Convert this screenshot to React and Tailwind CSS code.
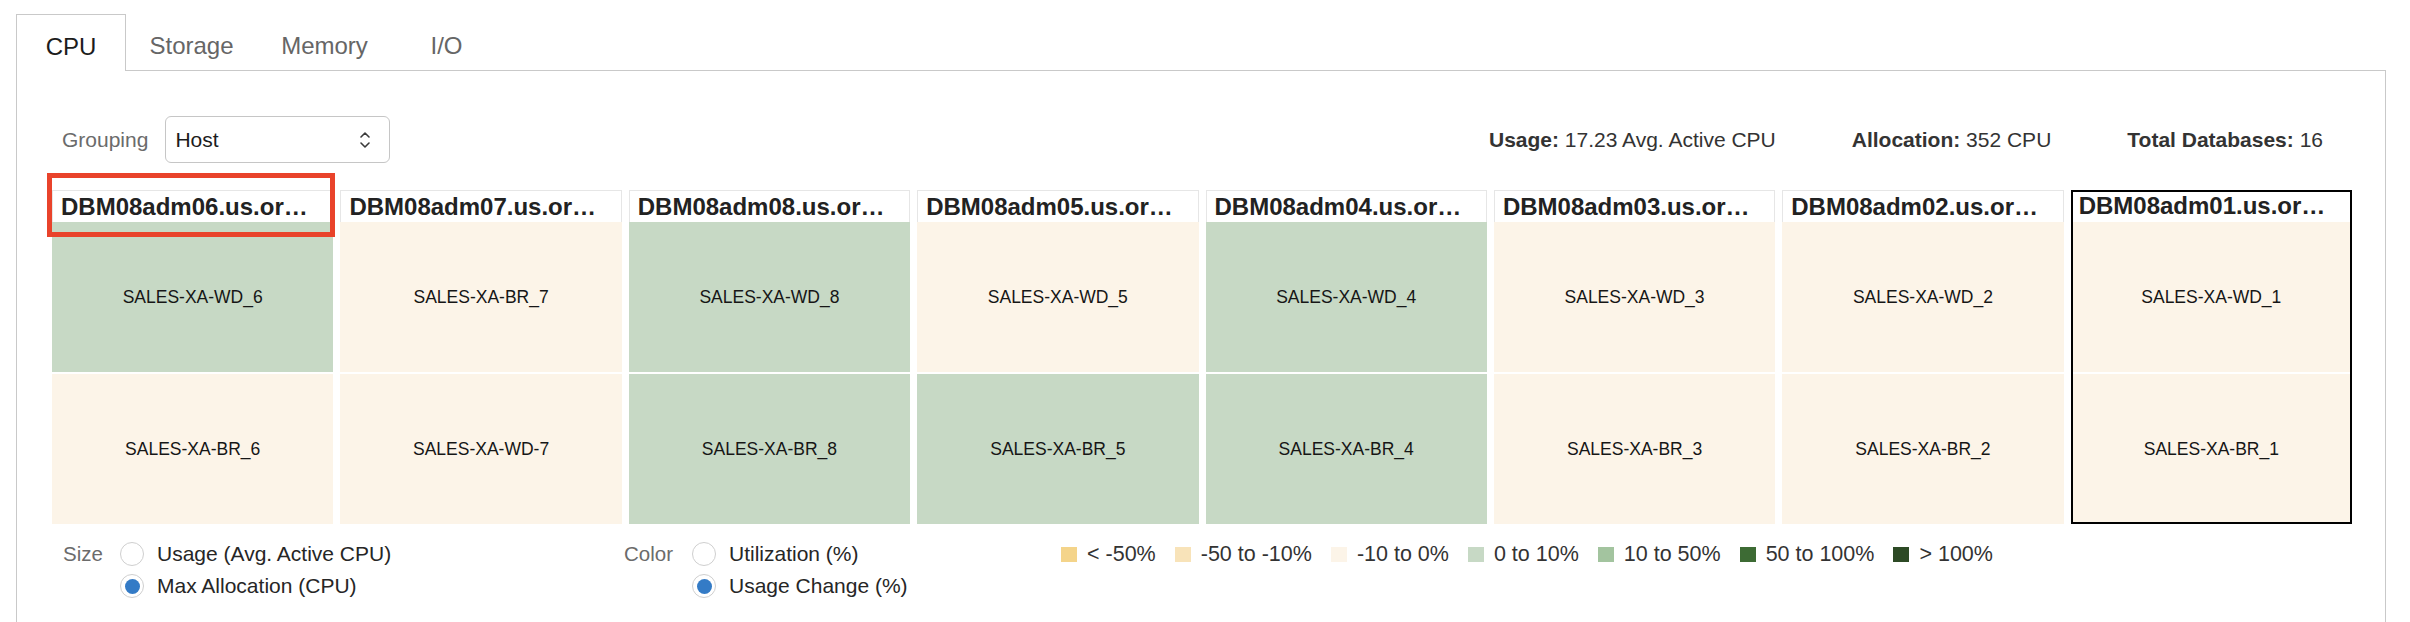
import React from 'react'

/* ─── data ──────────────────────────────────────────────────────────────── */
const GREEN = 'bg-[#c7d9c5]'
const CREAM = 'bg-[#fcf4e8]'

const hosts = [
  { name: 'DBM08adm06.us.or…', top: ['SALES-XA-WD_6', GREEN], bottom: ['SALES-XA-BR_6', CREAM], flagged: true },
  { name: 'DBM08adm07.us.or…', top: ['SALES-XA-BR_7', CREAM], bottom: ['SALES-XA-WD-7', CREAM] },
  { name: 'DBM08adm08.us.or…', top: ['SALES-XA-WD_8', GREEN], bottom: ['SALES-XA-BR_8', GREEN] },
  { name: 'DBM08adm05.us.or…', top: ['SALES-XA-WD_5', CREAM], bottom: ['SALES-XA-BR_5', GREEN] },
  { name: 'DBM08adm04.us.or…', top: ['SALES-XA-WD_4', GREEN], bottom: ['SALES-XA-BR_4', GREEN] },
  { name: 'DBM08adm03.us.or…', top: ['SALES-XA-WD_3', CREAM], bottom: ['SALES-XA-BR_3', CREAM] },
  { name: 'DBM08adm02.us.or…', top: ['SALES-XA-WD_2', CREAM], bottom: ['SALES-XA-BR_2', CREAM] },
  { name: 'DBM08adm01.us.or…', top: ['SALES-XA-WD_1', CREAM], bottom: ['SALES-XA-BR_1', CREAM], selected: true },
]

const legend = [
  ['bg-[#f4d48a]', '< -50%'],
  ['bg-[#f8e3b9]', '-50 to -10%'],
  ['bg-[#fcf4e8]', '-10 to 0%'],
  ['bg-[#c7d9c5]', '0 to 10%'],
  ['bg-[#a3c49f]', '10 to 50%'],
  ['bg-[#3d6b34]', '50 to 100%'],
  ['bg-[#2d4a25]', '> 100%'],
]

/* ─── bits ──────────────────────────────────────────────────────────────── */
function Radio({ checked, label }) {
  return (
    <div className="flex items-center h-[32px]">
      <span className="w-[24px] h-[24px] rounded-full border-[1.5px] border-[#cfcfcf] bg-white flex items-center justify-center shrink-0">
        {checked && <span className="w-[15px] h-[15px] rounded-full bg-[#347bc6]" />}
      </span>
      <span className="ml-[13px] text-[21px] text-[#262626] whitespace-nowrap">{label}</span>
    </div>
  )
}

function Cell({ label, color }) {
  return (
    <div className={`h-[150px] flex items-center justify-center text-[17.5px] text-[#161616] ${color}`}>
      {label}
    </div>
  )
}

function HostColumn({ host }) {
  return (
    <div className={`relative flex flex-col ${host.selected ? 'outline-2 outline-black -outline-offset-2' : ''}`}>
      <div
        className={`h-[32px] bg-white flex items-center pl-[8px] text-[24px] font-bold text-[#222] whitespace-nowrap overflow-hidden ${
          host.selected ? '' : 'border border-b-0 border-[#e6e6e6]'
        }`}
      >
        {host.name}
      </div>
      <Cell label={host.top[0]} color={host.top[1]} />
      <div className="h-[2px] bg-white" />
      <Cell label={host.bottom[0]} color={host.bottom[1]} />
      {host.flagged && (
        <div className="absolute -left-[5px] -top-[17px] w-[288px] h-[64px] border-[5px] border-[#e9432b] pointer-events-none" />
      )}
    </div>
  )
}

/* ─── page ──────────────────────────────────────────────────────────────── */
export default function App() {
  return (
    <div className="w-[2410px] h-[622px] overflow-hidden bg-white pl-[16px] pr-[24px] pt-[14px] font-['Liberation_Sans',Arial,sans-serif]">
      {/* tabs */}
      <div className="flex items-end h-[57px] border-b border-[#c9c9c9]">
        <div className="w-[110px] h-[57px] -mb-px pt-[7px] bg-white border border-b-0 border-[#c9c9c9] flex items-center justify-center text-[24px] text-[#1c1c1c]">
          CPU
        </div>
        <div className="w-[131px] h-[56px] pt-[7px] flex items-center justify-center text-[24px] text-[#666]">Storage</div>
        <div className="w-[135px] h-[56px] pt-[7px] flex items-center justify-center text-[24px] text-[#666]">Memory</div>
        <div className="w-[109px] h-[56px] pt-[7px] flex items-center justify-center text-[24px] text-[#666]">I/O</div>
      </div>

      {/* panel */}
      <div className="h-[560px] border-l border-r border-[#c9c9c9] pl-[35px] pr-[33px] pt-[45px]">
        {/* controls row */}
        <div className="flex items-center h-[47px]">
          <span className="ml-[10px] text-[21px] text-[#6b6b6b]">Grouping</span>
          <div className="ml-[17px] w-[225px] h-[47px] rounded-[6px] border border-[#c6c6c6] bg-white flex items-center justify-between pl-[9px] pr-[18px]">
            <span className="text-[21px] text-[#1c1c1c]">Host</span>
            <svg width="12" height="20" viewBox="0 0 12 20" fill="none" stroke="#3a3a3a" strokeWidth="1.6" strokeLinecap="round" strokeLinejoin="round">
              <path d="M2 7l4-4 4 4" />
              <path d="M2 13l4 4 4-4" />
            </svg>
          </div>

          <div className="ml-auto mr-[29px] flex items-center gap-[76px] text-[21px] text-[#333]">
            <span><b className="font-bold">Usage:</b> 17.23 Avg. Active CPU</span>
            <span><b className="font-bold">Allocation:</b> 352 CPU</span>
            <span><b className="font-bold">Total Databases:</b> 16</span>
          </div>
        </div>

        {/* treemap */}
        <div className="mt-[27px] grid grid-cols-8 gap-[7px]">
          {hosts.map((h) => (
            <HostColumn key={h.name} host={h} />
          ))}
        </div>

        {/* size / color / legend */}
        <div className="mt-[14px] flex items-start">
          <div className="w-[572px] flex items-start">
            <span className="w-[68px] pl-[11px] h-[32px] flex items-center text-[20.5px] text-[#6b6b6b]">Size</span>
            <div className="flex flex-col">
              <Radio label="Usage (Avg. Active CPU)" />
              <Radio checked label="Max Allocation (CPU)" />
            </div>
          </div>
          <div className="w-[437px] flex items-start">
            <span className="w-[68px] h-[32px] flex items-center text-[20.5px] text-[#6b6b6b]">Color</span>
            <div className="flex flex-col">
              <Radio label="Utilization (%)" />
              <Radio checked label="Usage Change (%)" />
            </div>
          </div>
          <div className="h-[32px] flex items-center gap-[19px]">
            {legend.map(([c, t]) => (
              <div key={t} className="flex items-center gap-[10px]">
                <span className={`w-[16px] h-[15px] ${c}`} />
                <span className="text-[21.5px] text-[#333] whitespace-nowrap">{t}</span>
              </div>
            ))}
          </div>
        </div>
      </div>
    </div>
  )
}
